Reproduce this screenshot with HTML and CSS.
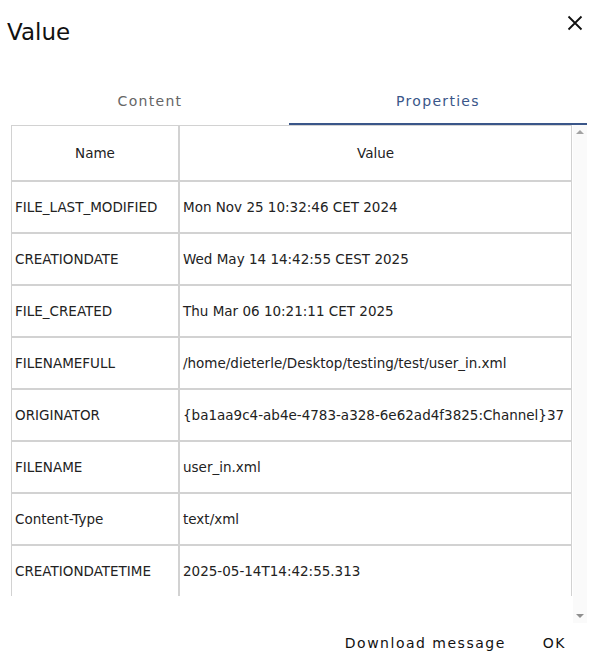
FILE: index.html
```html
<html lang="en">
<head>
     <meta charset="UTF-8">
     <title>Value</title>
     <link rel="stylesheet" href="styles.css">
</head>
<body>
     <div class="dialog">
          <div class="dlg-head">
               <h1 class="dlg-title">Value</h1>
               <button class="dlg-close" title="Close">
                    <svg width="16" height="16" viewBox="0 0 16 16"><path d="M1.5 1.5L14.5 14.5M14.5 1.5L1.5 14.5" stroke="#111" stroke-width="1.8" fill="none"/></svg>
               </button>
          </div>
          <div class="tabs">
               <div class="tab tab-content">Content</div>
               <div class="tab tab-props active">Properties</div>
          </div>
          <div class="pane">
               <div class="grid-view">
                    <table class="props">
                         <tr><th class="c-name">Name</th><th class="c-value">Value</th></tr>
                         <tr><td>FILE_LAST_MODIFIED</td><td>Mon Nov 25 10:32:46 CET 2024</td></tr>
                         <tr><td>CREATIONDATE</td><td>Wed May 14 14:42:55 CEST 2025</td></tr>
                         <tr><td>FILE_CREATED</td><td>Thu Mar 06 10:21:11 CET 2025</td></tr>
                         <tr><td>FILENAMEFULL</td><td>/home/dieterle/Desktop/testing/test/user_in.xml</td></tr>
                         <tr><td>ORIGINATOR</td><td>{ba1aa9c4-ab4e-4783-a328-6e62ad4f3825:Channel}37</td></tr>
                         <tr><td>FILENAME</td><td>user_in.xml</td></tr>
                         <tr><td>Content-Type</td><td>text/xml</td></tr>
                         <tr><td>CREATIONDATETIME</td><td>2025-05-14T14:42:55.313</td></tr>
                    </table>
               </div>
               <div class="vscroll">
                    <span class="arr arr-up"></span>
                    <span class="arr arr-down"></span>
               </div>
          </div>
          <div class="dlg-foot">
               <button class="btn">Download message</button>
               <button class="btn">OK</button>
          </div>
     </div>
</body>
</html>
```

FILE: styles.css
```css
body{
     margin: 0px;
     background: #fff;
     font-family: "DejaVu Sans", sans-serif;
     color: #222;
}
.dialog{
     width: 598px;
     height: 667px;
}
.dlg-head{
     height: 62px;
     display: flex;
     justify-content: space-between;
     align-items: flex-start;
}
.dlg-title{
     margin: 0px;
     padding: 17px 0 0 7px;
     font-size: 23px;
     font-weight: normal;
     line-height: 30px;
     color: #111;
}
.dlg-close{
     margin: 15px 15px 0 0;
     padding: 0px;
     width: 16px;
     height: 16px;
     border: none;
     background: none;
     cursor: pointer;
}
.tabs{
     margin: 19px 11px 0 11px;
     display: flex;
}
.tab{
     height: 42px;
     line-height: 40px;
     text-align: center;
     font-size: 14px;
     letter-spacing: 1.3px;
     color: #666;
     border-bottom: 2px solid transparent;
}
.tab-content{
     width: 278px;
}
.tab-props{
     width: 298px;
}
.tab.active{
     color: #3a5689;
     border-bottom-color: #3a5689;
}
.pane{
     margin: 0 11px;
     height: 498px;
     display: flex;
}
.grid-view{
     width: 561px;
     height: 471px;
     overflow: hidden;
}
.props{
     width: 561px;
     border-collapse: separate;
     border-spacing: 0;
     font-size: 13.5px;
     table-layout: fixed;
}
.props th,.props td{
     border: 1px solid #d2d2d2;
     padding: 0 3px;
     white-space: nowrap;
     overflow: hidden;
}
.props th{
     height: 56px;
     font-weight: normal;
     text-align: center;
}
.props td{
     height: 52px;
     text-align: left;
}
.c-name{
     width: 160px;
}
.vscroll{
     margin-left: 1px;
     width: 14px;
     background: #fafafa;
     display: flex;
     flex-direction: column;
     justify-content: space-between;
     align-items: center;
     padding: 5px 0;
     box-sizing: border-box;
}
.arr{
     width: 0;
     height: 0;
     border-left: 4px solid transparent;
     border-right: 4px solid transparent;
}
.arr-up{
     border-bottom: 4px solid #a3a3a3;
}
.arr-down{
     border-top: 4px solid #8f8f8f;
}
.dlg-foot{
     height: 40px;
     display: flex;
     justify-content: flex-end;
     align-items: center;
     padding-right: 16px;
}
.btn{
     border: none;
     background: none;
     padding: 0 16px;
     margin-left: 5px;
     font-family: "DejaVu Sans", sans-serif;
     font-size: 14px;
     letter-spacing: 1.5px;
     color: #111;
     cursor: pointer;
}
```
